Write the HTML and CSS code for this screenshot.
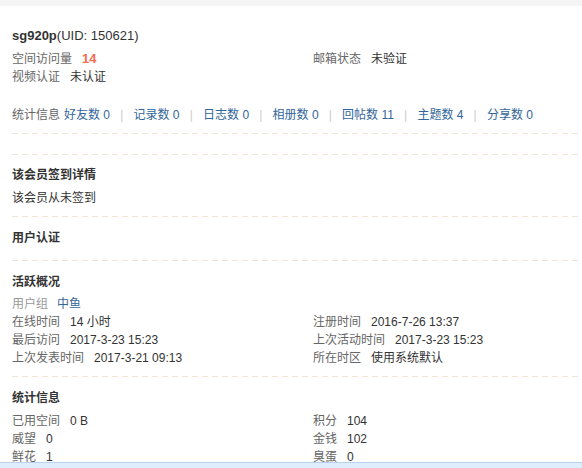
FILE: index.html
```html
<!DOCTYPE html>
<html lang="zh-CN">
<head>
    <meta charset="UTF-8">
    <meta name="viewport" content="width=device-width, initial-scale=1.0">
    <title>sg920p 的个人资料</title>
    <link rel="stylesheet" href="styles.css">
</head>
<body>
    <div class="topbar"></div>
    <div class="profile">
        <div class="block bbda head">
            <h2 class="name">sg920p<span class="uid">(UID: 150621)</span></h2>
            <ul class="pf-list two-col">
                <li><em>空间访问量</em><strong class="visits">14</strong></li>
                <li><em>邮箱状态</em>未验证</li>
                <li><em>视频认证</em>未认证</li>
            </ul>
            <p class="stat-links">
                <em>统计信息</em><a href="#">好友数 0</a><span class="pipe">|</span><a href="#">记录数 0</a><span class="pipe">|</span><a href="#">日志数 0</a><span class="pipe">|</span><a href="#">相册数 0</a><span class="pipe">|</span><a href="#">回帖数 11</a><span class="pipe">|</span><a href="#">主题数 4</a><span class="pipe">|</span><a href="#">分享数 0</a>
            </p>
        </div>
        <div class="block bbda spacer"></div>
        <div class="block bbda sign">
            <h3>该会员签到详情</h3>
            <p class="row">该会员从未签到</p>
        </div>
        <div class="block bbda auth">
            <h3>用户认证</h3>
        </div>
        <div class="block bbda">
            <h3>活跃概况</h3>
            <ul class="pf-list group">
                <li><em class="muted">用户组</em><a href="#">中鱼</a></li>
            </ul>
            <ul class="pf-list two-col">
                <li><em>在线时间</em>14 小时</li>
                <li><em>注册时间</em>2016-7-26 13:37</li>
                <li><em>最后访问</em>2017-3-23 15:23</li>
                <li><em>上次活动时间</em>2017-3-23 15:23</li>
                <li><em>上次发表时间</em>2017-3-21 09:13</li>
                <li><em>所在时区</em>使用系统默认</li>
            </ul>
        </div>
        <div class="block">
            <h3>统计信息</h3>
            <ul class="pf-list two-col">
                <li><em>已用空间</em>0 B</li>
                <li><em>积分</em>104</li>
                <li><em>威望</em>0</li>
                <li><em>金钱</em>102</li>
                <li><em>鲜花</em>1</li>
                <li><em>臭蛋</em>0</li>
            </ul>
        </div>
    </div>
    <div class="dock"></div>
</body>
</html>
```

FILE: styles.css
```css
body {
    margin: 0;
    background: #ffffff;
    color: #333;
    font: 12px/18px "Liberation Sans", "Noto Sans CJK SC", sans-serif;
    overflow: hidden;
}
ul, p, h2, h3 {
    margin: 0;
    padding: 0;
}
ul {
    list-style: none;
}
em {
    font-style: normal;
}
a {
    color: #336699;
    text-decoration: none;
}
.topbar {
    height: 6px;
    background: #f5f5f5;
}
.profile {
    padding: 0 2px 0 12px;
}
/* dashed separator drawn on the last pixel of the padding */
.bbda {
    background-image: linear-gradient(90deg, #f0e5d6 6px, transparent 6px);
    background-size: 10px 1px;
    background-repeat: repeat-x;
    background-position: left bottom;
    padding-bottom: 10px;
}
.block {
    padding-top: 12px;
}
.head {
    padding-top: 21px;
}
.spacer {
    padding-top: 10px;
    padding-bottom: 11px;
}
.sign {
    padding-top: 11px;
}
.auth {
    padding-bottom: 14px;
}
.name {
    font-size: 13px;
    font-weight: bold;
    line-height: 18px;
}
.uid {
    font-weight: normal;
}
h3 {
    font-size: 12px;
    font-weight: bold;
    line-height: 18px;
}
.pf-list, .row {
    margin-top: 5px;
}
.group {
    margin-top: 4px;
}
.group + .two-col {
    margin-top: 0;
}
.two-col {
    display: grid;
    grid-template-columns: 301px 1fr;
}
.pf-list em {
    color: #666;
    margin-right: 10px;
}
.pf-list em.muted {
    color: #999;
    margin-right: 9px;
}
.visits {
    color: #f26c4f;
    font-size: 13px;
}
.stat-links {
    margin-top: 20px;
}
.stat-links em {
    color: #666;
    margin-right: 4px;
}
.pipe {
    color: #cccccc;
    margin: 0 10.2px;
}
.dock {
    position: fixed;
    left: 0;
    right: 0;
    bottom: 0;
    height: 5px;
    background: #deeefd;
    border-top: 1px solid #b9d1ea;
}
```
